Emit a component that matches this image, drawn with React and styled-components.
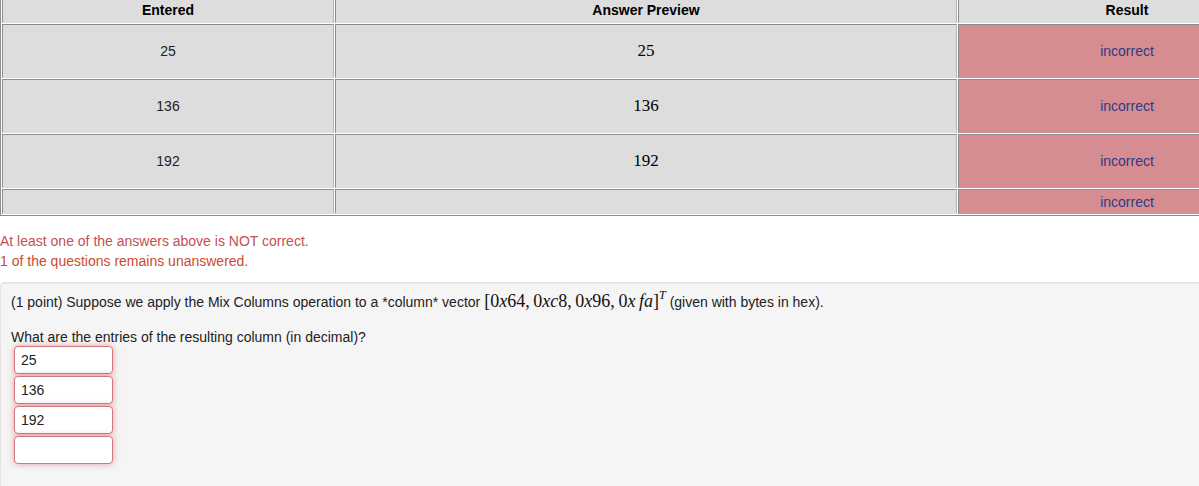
import React from "react";
import styled, { createGlobalStyle } from "styled-components";

const GlobalStyle = createGlobalStyle`
  html, body {
    margin: 0;
    padding: 0;
    background: #fff;
    overflow: hidden;
  }
  body {
    font-family: "Liberation Sans", Arial, sans-serif;
    font-size: 14px;
    color: #222;
  }
`;

const rows = [
  { entered: "25", preview: "25", result: "incorrect", tall: true },
  { entered: "136", preview: "136", result: "incorrect", tall: true },
  { entered: "192", preview: "192", result: "incorrect", tall: true },
  { entered: "", preview: "", result: "incorrect", tall: false },
];

const App = () => {
  return (
    <>
      <GlobalStyle />
      <Page>
        <ResultsTable>
          <colgroup>
            <col style={{ width: 332 }} />
            <col style={{ width: 622 }} />
            <col style={{ width: 338 }} />
          </colgroup>
          <thead>
            <tr>
              <HeadCell>Entered</HeadCell>
              <HeadCell>Answer Preview</HeadCell>
              <HeadCell>Result</HeadCell>
            </tr>
          </thead>
          <tbody>
            {rows.map((r, i) => (
              <Row key={i} $tall={r.tall}>
                <Cell>{r.entered}</Cell>
                <PreviewCell>{r.preview}</PreviewCell>
                <Cell $error>{r.result}</Cell>
              </Row>
            ))}
          </tbody>
        </ResultsTable>

        <Messages>
          <Message $color="#c44f55">At least one of the answers above is NOT correct.</Message>
          <Message $color="#cc4b2e">1 of the questions remains unanswered.</Message>
        </Messages>

        <ProblemBox>
          <Question>
            (1 point) Suppose we apply the Mix Columns operation to a *column* vector{" "}
            <MathExpr>
              [0<i>x</i>64,&thinsp;0<i>xc</i>8,&thinsp;0<i>x</i>96,&thinsp;0<i>x&thinsp;fa</i>]
              <sup>
                <i>T</i>
              </sup>
            </MathExpr>{" "}
            (given with bytes in hex).
          </Question>
          <Prompt>What are the entries of the resulting column (in decimal)?</Prompt>
          <Inputs>
            <AnswerInput defaultValue="25" />
            <AnswerInput defaultValue="136" />
            <AnswerInput defaultValue="192" />
            <AnswerInput defaultValue="" />
          </Inputs>
        </ProblemBox>
      </Page>
    </>
  );
};

export default App;

const Page = styled.div`
  width: 1199px;
  min-height: 486px;
  overflow: hidden;
  display: flex;
  flex-direction: column;
`;

const ResultsTable = styled.table`
  width: 1297px;
  table-layout: fixed;
  margin-top: -3px;
  border-style: solid;
  border-width: 1px;
  border-color: #e8e8e8 #8c8c8c #8c8c8c #8c8c8c;
  border-spacing: 1px;
  background: #fff;
`;

const HeadCell = styled.th`
  height: 24px;
  padding: 0 5px 2px 5px;
  box-sizing: border-box;
  background: #dddddd;
  border-top: 1px solid #8c8c8c;
  border-left: 1px solid #8c8c8c;
  border-right: 1px solid #b4b4b4;
  border-bottom: 1px solid #dddddd;
  font-size: 14px;
  font-weight: bold;
  color: #000;
  text-align: center;
  vertical-align: middle;
  line-height: 18px;
`;

const Row = styled.tr`
  height: ${(p) => (p.$tall ? "54px" : "25px")};
`;

const Cell = styled.td`
  padding: 0 5px;
  box-sizing: border-box;
  background: ${(p) => (p.$error ? "#d58d91" : "#dddddd")};
  border-top: 1px solid #8c8c8c;
  border-left: 1px solid #8c8c8c;
  border-right: 1px solid ${(p) => (p.$error ? "#d58d91" : "#b4b4b4")};
  border-bottom: 1px solid ${(p) => (p.$error ? "#d58d91" : "#dddddd")};
  font-size: 14px;
  color: ${(p) => (p.$error ? "#2e3a86" : "#222")};
  text-align: center;
  vertical-align: middle;
`;

const PreviewCell = styled(Cell)`
  font-family: "Liberation Serif", "DejaVu Serif", serif;
  font-size: 17px;
  color: #000;
`;

const Messages = styled.div`
  display: flex;
  flex-direction: column;
  margin-top: 15px;
`;

const Message = styled.div`
  font-size: 14px;
  line-height: 20px;
  color: ${(p) => p.$color};
`;

const ProblemBox = styled.div`
  flex: 1;
  width: 1260px;
  margin-top: 11px;
  margin-bottom: -20px;
  padding: 6px 10px 20px 10px;
  background: #f5f5f5;
  border: 1px solid #e3e3e3;
  border-radius: 4px;
  box-shadow: inset 0 1px 1px rgba(0, 0, 0, 0.05);
`;

const Question = styled.p`
  margin: 0;
  font-size: 14px;
  line-height: 24px;
  color: #222;
`;

const MathExpr = styled.span`
  font-family: "Liberation Serif", "DejaVu Serif", serif;
  font-size: 18px;
  color: #111;
  i {
    font-style: italic;
  }
  sup {
    font-size: 12px;
    vertical-align: 8px;
    line-height: 0;
  }
`;

const Prompt = styled.p`
  margin: 15px 0 0 0;
  font-size: 14px;
  line-height: 16px;
  color: #222;
`;

const Inputs = styled.div`
  display: flex;
  flex-direction: column;
  gap: 2px;
  margin: 1px 0 0 3px;
`;

const AnswerInput = styled.input`
  box-sizing: border-box;
  width: 99px;
  height: 28px;
  padding: 0 6px;
  border: 1px solid #d2777e;
  border-radius: 4px;
  background: #fff;
  box-shadow: 0 0 6px rgba(210, 90, 100, 0.55);
  font-family: "Liberation Sans", Arial, sans-serif;
  font-size: 14px;
  color: #222;
  outline: none;
`;
